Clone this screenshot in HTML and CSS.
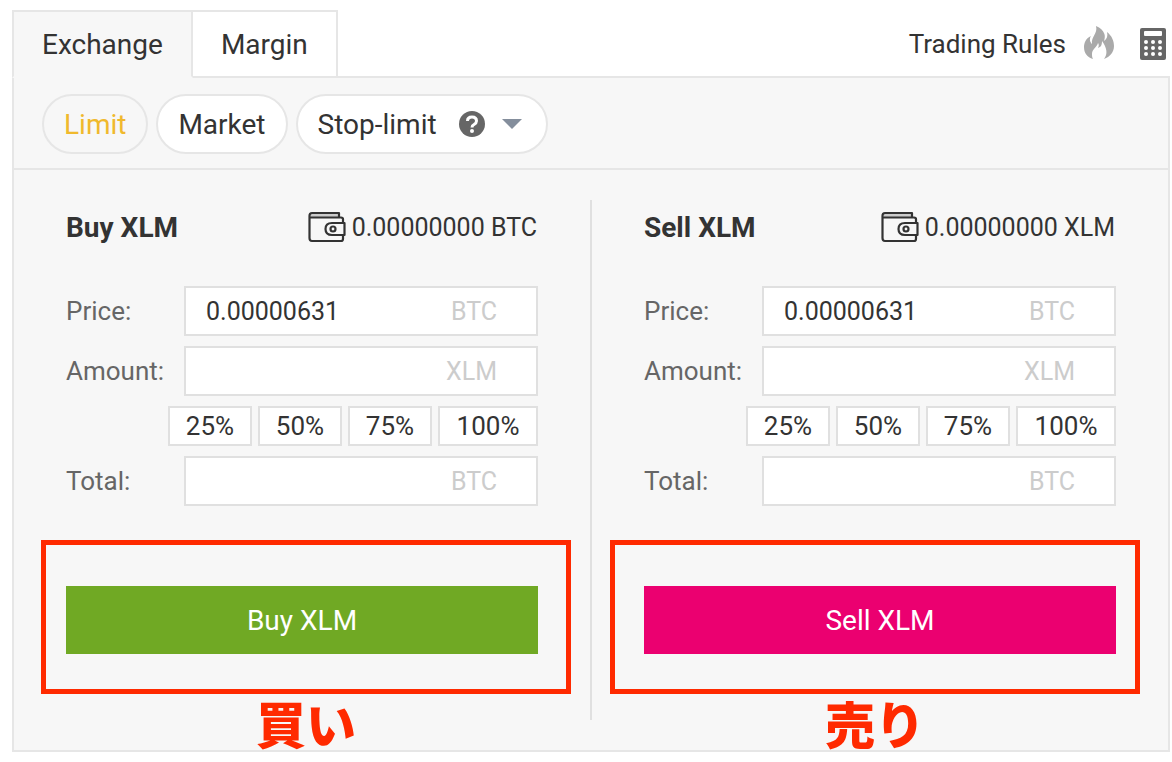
FILE: index.html
```html
<!DOCTYPE html>
<html lang="en">
<head>
    <meta charset="UTF-8">
    <title>Exchange XLM / BTC</title>
    <link rel="stylesheet" href="styles.css">
</head>
<body>
<svg class="defs" width="0" height="0">
    <symbol id="wallet" viewBox="0 0 38 32">
        <path d="M3 3H30V6H3Z" fill="#ccc"/>
        <g fill="none" stroke="currentColor" stroke-width="2.200" stroke-linejoin="round">
            <path d="M31 6V2H4Q1.500 2 1.500 5V27Q1.500 30 4 30H33Q35 30 35 28V24M35 12V8Q35 6.500 33 6.500H2"/>
            <path d="M36.500 12H24Q17.500 12 17.500 18Q17.500 24 24 24H36.500Z"/>
            <circle cx="25" cy="18" r="2.500"/>
        </g>
    </symbol>
</svg>
<div class="trade">
    <div class="top">
        <button class="tab active" type="button">Exchange</button>
        <button class="tab" type="button">Margin</button>
        <div class="tools">
            <a class="rules" href="#">Trading Rules
                <svg width="30" height="36" viewBox="0 0 30 36" fill="#aaa">
                    <path d="M12 0C21 4 22 10 20 15C23 13 24 10 23 6C28 10 30 15 30 20C30 26 26 31 20 33C24 28 23 22 18 15C18 19 17 21 14 22C15 20 15 18 14 17C13 21 8 23 8 28C8 30 8 31 9 33C3 31 0 27 0 21C0 17 2 12 7 10C5 13 6 16 8 18C7 10 14 8 12 0Z"/>
                </svg>
            </a>
            <a class="calc" href="#" aria-label="Calculator">
                <svg width="26" height="32" viewBox="0 0 26 32">
                    <rect width="26" height="32" rx="2" fill="#666"/>
                    <rect x="4" y="3" width="18" height="5" rx="1" fill="#fff"/>
                    <g fill="#fff">
                        <circle cx="6" cy="14" r="2"/><circle cx="13" cy="14" r="2"/><circle cx="20" cy="14" r="2"/>
                        <circle cx="6" cy="20" r="2"/><circle cx="13" cy="20" r="2"/><circle cx="20" cy="20" r="2"/>
                        <circle cx="6" cy="26" r="2"/><circle cx="13" cy="26" r="2"/><circle cx="20" cy="26" r="2"/>
                    </g>
                </svg>
            </a>
        </div>
    </div>
    <div class="panel">
        <div class="types">
            <button class="type active" type="button">Limit</button>
            <button class="type" type="button">Market</button>
            <button class="type more" type="button">Stop-limit
                <svg class="help" width="26" height="26" viewBox="0 0 26 26">
                    <circle cx="13" cy="13" r="13" fill="#666"/>
                    <path d="M8.500 10Q8.500 6 13 6Q17.500 6 17.500 10Q17.500 12 15 13.500Q13 14.500 13 16.500" fill="none" stroke="#fff" stroke-width="3"/>
                    <circle cx="13" cy="20" r="2" fill="#fff"/>
                </svg>
                <svg width="20" height="10" viewBox="0 0 20 10"><path d="M0 0H20L10 10Z" fill="#848e9c"/></svg>
            </button>
        </div>
        <div class="forms">
            <form class="form">
                <div class="head">
                    <h2>Buy XLM</h2>
                    <div class="balance"><svg width="38" height="32"><use href="#wallet"/></svg>0.00000000 BTC</div>
                </div>
                <div class="row">
                    <label for="buyPrice">Price:</label>
                    <div class="field"><input id="buyPrice" type="text" value="0.00000631"><span>BTC</span></div>
                </div>
                <div class="row">
                    <label for="buyAmount">Amount:</label>
                    <div class="field"><input id="buyAmount" type="text"><span>XLM</span></div>
                </div>
                <div class="percent">
                    <button type="button">25%</button>
                    <button type="button">50%</button>
                    <button type="button">75%</button>
                    <button type="button">100%</button>
                </div>
                <div class="row">
                    <label for="buyTotal">Total:</label>
                    <div class="field"><input id="buyTotal" type="text"><span>BTC</span></div>
                </div>
                <div class="mark mark-buy">
                    <button class="submit buy" type="button">Buy XLM</button>
                </div>
                <p class="note note-buy" lang="ja">買い</p>
            </form>
            <div class="line"></div>
            <form class="form">
                <div class="head">
                    <h2>Sell XLM</h2>
                    <div class="balance"><svg width="38" height="32"><use href="#wallet"/></svg>0.00000000 XLM</div>
                </div>
                <div class="row">
                    <label for="sellPrice">Price:</label>
                    <div class="field"><input id="sellPrice" type="text" value="0.00000631"><span>BTC</span></div>
                </div>
                <div class="row">
                    <label for="sellAmount">Amount:</label>
                    <div class="field"><input id="sellAmount" type="text"><span>XLM</span></div>
                </div>
                <div class="percent">
                    <button type="button">25%</button>
                    <button type="button">50%</button>
                    <button type="button">75%</button>
                    <button type="button">100%</button>
                </div>
                <div class="row">
                    <label for="sellTotal">Total:</label>
                    <div class="field"><input id="sellTotal" type="text"><span>BTC</span></div>
                </div>
                <div class="mark mark-sell">
                    <button class="submit sell" type="button">Sell XLM</button>
                </div>
                <p class="note note-sell" lang="ja">売り</p>
            </form>
        </div>
    </div>
</div>
</body>
</html>
```
FILE: styles.css
```css
*{
    margin: 0;
    padding: 0;
    box-sizing: border-box;
}
body{
    background: #fff;
    color: #333;
    font-family: Roboto, "Noto Sans CJK JP", sans-serif;
    font-size: 26px;
}
button, input{
    font: inherit;
    color: inherit;
}
button{
    cursor: pointer;
}
a{
    color: inherit;
    text-decoration: none;
}
.defs{
    position: absolute;
}
.trade{
    padding: 10px 2px 10px 12px;
}
/* tabs */
.top{
    display: flex;
}
.tab{
    height: 68px;
    padding: 0 28px;
    margin-bottom: -2px;
    border: 2px solid #e6e6e6;
    background: #fff;
    font-size: 28px;
}
.tab + .tab{
    border-left: 0;
}
.tab.active{
    position: relative;
    background: #f7f7f7;
    border-bottom-color: #f7f7f7;
}
.tools{
    display: flex;
    align-items: center;
    gap: 26px;
    height: 66px;
    margin-left: auto;
    padding: 2px 4px 0 0;
}
.rules{
    display: flex;
    align-items: center;
    gap: 18px;
}
.calc{
    display: flex;
}
.panel{
    border: 2px solid #e6e6e6;
    background: #f7f7f7;
}
/* order types */
.types{
    display: flex;
    gap: 8px;
    padding: 16px 28px 14px;
    border-bottom: 2px solid #e6e6e6;
}
.type{
    display: flex;
    align-items: center;
    height: 60px;
    padding: 0 20px;
    border: 2px solid #e6e6e6;
    border-radius: 30px;
    background: #fff;
    font-size: 28px;
}
.type.active{
    background: #f7f7f7;
    color: #f0b92d;
}
.type.more{
    padding-right: 24px;
}
.help{
    margin: 0 17px 0 22px;
}
/* forms */
.forms{
    display: flex;
    padding-top: 30px;
}
.form{
    flex: 1;
    min-width: 0;
    padding: 0 52px;
}
.line{
    width: 2px;
    margin-bottom: 30px;
    background: #e0e0e0;
}
.head{
    display: flex;
    align-items: center;
    justify-content: space-between;
    height: 54px;
    margin-bottom: 32px;
}
.head h2{
    font-size: 28px;
}
.balance{
    display: flex;
    align-items: center;
    gap: 6px;
    padding-right: 1px;
    font-size: 25px;
}
.row{
    display: flex;
    align-items: center;
    margin-bottom: 10px;
}
.row label{
    width: 118px;
    color: #666;
}
.field{
    display: flex;
    align-items: center;
    flex: 1;
    min-width: 0;
    height: 50px;
    padding: 0 39px 0 20px;
    border: 2px solid #e0e0e0;
    background: #fff;
    font-size: 25px;
}
.field input{
    flex: 1;
    min-width: 0;
    border: 0;
    outline: 0;
    background: none;
}
.field span{
    color: #ccc;
}
.percent{
    display: grid;
    grid-template-columns: 84px 84px 84px 100px;
    justify-content: end;
    gap: 6px;
    margin-bottom: 10px;
}
.percent button{
    height: 40px;
    border: 2px solid #e0e0e0;
    background: #fff;
}
.submit{
    display: block;
    width: 100%;
    height: 68px;
    border: 0;
    color: #fff;
    font-size: 28px;
}
.buy{
    background: #70a924;
}
.sell{
    background: #eb0070;
}
/* red frames and notes */
.mark{
    margin-top: 34px;
    border: 5px solid #ff2a00;
}
.mark-buy{
    padding: 41px 28px 35px 20px;
}
.mark-sell{
    padding: 41px 19px 35px 29px;
}
.mark-buy, .note-buy{
    margin-left: -25px;
    margin-right: -33px;
}
.mark-sell, .note-sell{
    margin-left: -34px;
    margin-right: -24px;
}
.note{
    height: 56px;
    color: #ff2a00;
    font-family: "Noto Sans CJK JP", sans-serif;
    font-size: 50px;
    font-weight: 900;
    line-height: 56px;
    text-align: center;
}
```
